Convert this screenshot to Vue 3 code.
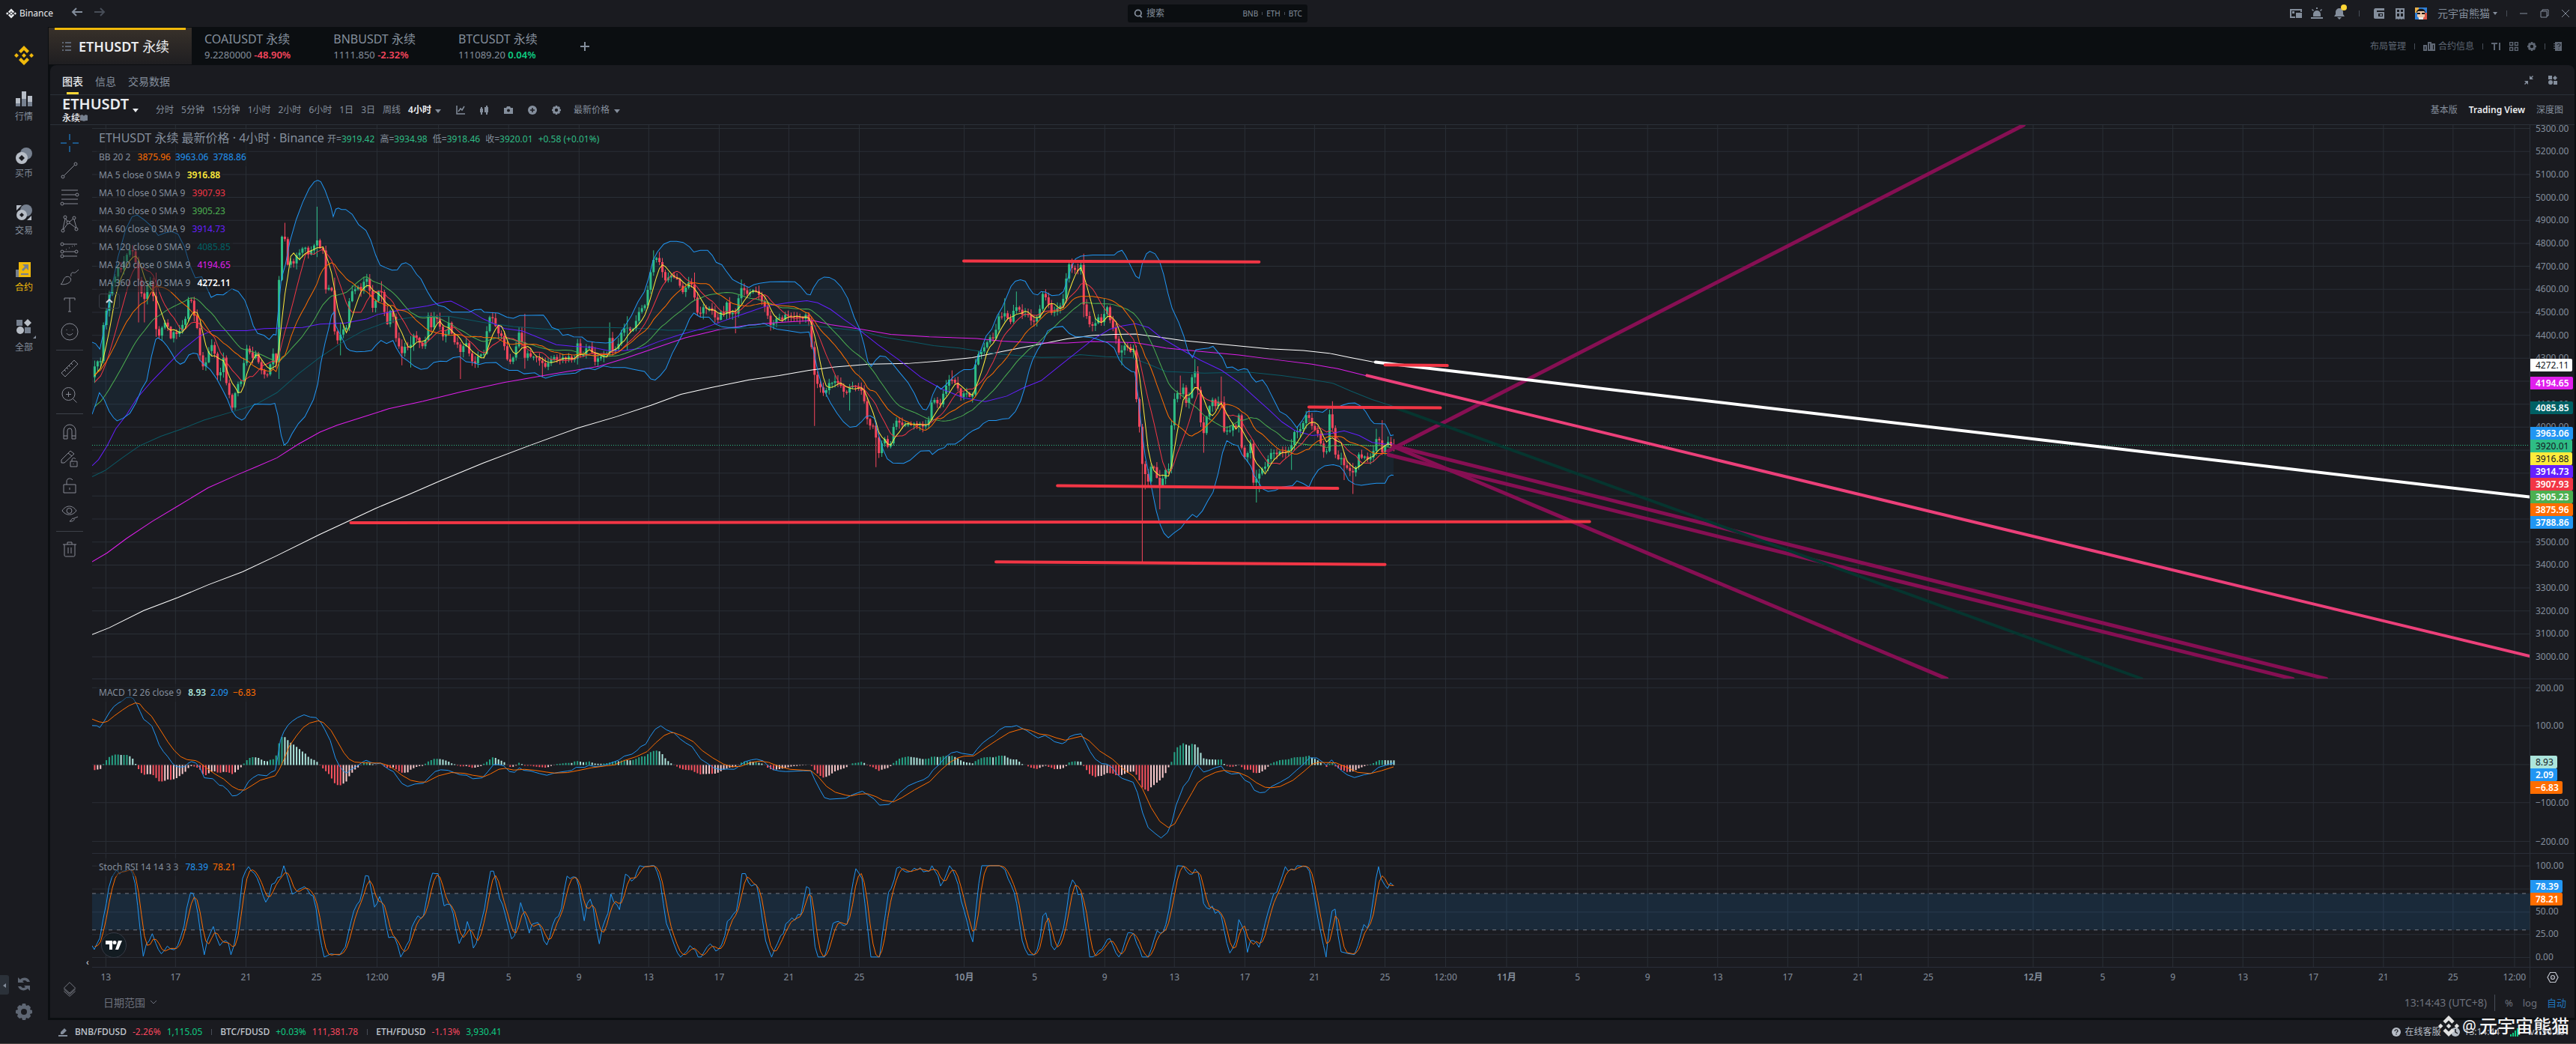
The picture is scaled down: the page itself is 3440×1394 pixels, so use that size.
<script setup>
import { ref } from 'vue'

// ---------- static content ----------
const marketTabs = [
  { symbol: 'COAIUSDT 永续', price: '9.2280000', change: '-48.90%', up: false },
  { symbol: 'BNBUSDT 永续', price: '1111.850', change: '-2.32%', up: false },
  { symbol: 'BTCUSDT 永续', price: '111089.20', change: '0.04%', up: true },
]
const panelTabs = ['图表', '信息', '交易数据']
const activePanel = ref('图表')
const intervals = ['分时', '5分钟', '15分钟', '1小时', '2小时', '6小时', '1日', '3日', '周线']
const views = ['基本版', 'Trading View', '深度图']
const activeView = ref('Trading View')

const legend = [
  { label: 'MA 5 close 0 SMA 9', value: '3916.88', color: '#ffeb3b', bold: true },
  { label: 'MA 10 close 0 SMA 9', value: '3907.93', color: '#f23645' },
  { label: 'MA 30 close 0 SMA 9', value: '3905.23', color: '#4caf50' },
  { label: 'MA 60 close 0 SMA 9', value: '3914.73', color: '#651fff' },
  { label: 'MA 120 close 0 SMA 9', value: '4085.85', color: '#006064' },
  { label: 'MA 240 close 0 SMA 9', value: '4194.65', color: '#e01fed' },
  { label: 'MA 360 close 0 SMA 9', value: '4272.11', color: '#ffffff', bold: true },
]

const tools = [
  [
    { name: '十字线', d: 'M12 0v8M12 16v8M0 12h8M16 12h8', active: true },
    { name: '趋势线', d: 'M4.5 19.5 18.5 5.5M5 21a2 2 0 1 1-4 0a2 2 0 1 1 4 0M22 4a2 2 0 1 1-4 0a2 2 0 1 1 4 0' },
    { name: '斐波那契', d: 'M1 3h22M1 9h19M1 15h22M4 21h19M24 9a2 2 0 1 1-4 0a2 2 0 1 1 4 0M4 21a2 2 0 1 1-4 0a2 2 0 1 1 4 0' },
    { name: '形态', d: 'M3 19 6 5M7 5l2 4M12 9l5-4M18 6l3 11M12 11l8 6M9 12 4 19M5 21a2 2 0 1 1-4 0a2 2 0 1 1 4 0M8 3a2 2 0 1 1-4 0a2 2 0 1 1 4 0M12 10a2 2 0 1 1-4 0a2 2 0 1 1 4 0M20 4a2 2 0 1 1-4 0a2 2 0 1 1 4 0M23 19a2 2 0 1 1-4 0a2 2 0 1 1 4 0' },
    { name: '预测', d: 'M4 3h18M4 13h15M4 19h18M7 10h1M11 8h1M15 6h1M18 5h1M4 3a2 2 0 1 1-4 0a2 2 0 1 1 4 0M4 13a2 2 0 1 1-4 0a2 2 0 1 1 4 0M23 13a2 2 0 1 1-4 0a2 2 0 1 1 4 0M4 19a2 2 0 1 1-4 0a2 2 0 1 1 4 0' },
    { name: '画笔', d: 'M0 20.5c4-2 3-9 8-10 4-1 7 3 5 6s-7 5-13 4zM14 10c-1-3 1-6 3-5 2 1 4-1 7-4' },
    { name: '文本', d: 'M5 6V3h14v3M12 3v18M10 21h4' },
    { name: '表情', d: 'M23 12a11 11 0 1 1-22 0a11 11 0 1 1 22 0M8 9v1M16 9v1M8 14c2 3 6 3 8 0' },
  ],
  [
    { name: '测量', d: 'M1 18 18 1l5 5L6 23zM5 14l2 2M8 11l2 2M11 8l2 2M14 5l2 2' },
    { name: '放大', d: 'M19 10a8.5 8.5 0 1 1-17 0a8.5 8.5 0 1 1 17 0M16.5 16.5l5 5M10.5 7v7M7 10.5h7' },
  ],
  [
    { name: '磁铁', d: 'M4 21V10a8 8 0 0 1 16 0v11h-5V10a3 3 0 0 0-6 0v11zM4 17h5M15 17h5' },
    { name: '锁定绘图', d: 'M1 17V13L13 1l5 4L5 17zM10 4l5 4M13 15h9v7h-9zM15 15v-2c0-3 4-3 5-1M17 18v1' },
    { name: '锁定', d: 'M4 10h16v11H4zM8 10V6c0-5 6-5 8-2M12 14v3' },
    { name: '隐藏', d: 'M2 9C7 1 16 1 21 9 16 16 7 16 2 9M15 9a3.5 3.5 0 1 1-7 0a3.5 3.5 0 1 1 7 0M12 23c3-1 2-4 5-4 3 1 0 5-5 4M18 19l5-2' },
  ],
  [{ name: '删除', d: 'M3 5h18M9 5V2h6v3M5 5v14c0 2 1 2 2 2h10c1 0 2 0 2-2V5M10 9v8M14 9v8' }],
]

const tickers = [
  { pair: 'BNB/FDUSD', change: '-2.26%', changeUp: false, price: '1,115.05', priceUp: true },
  { pair: 'BTC/FDUSD', change: '+0.03%', changeUp: true, price: '111,381.78', priceUp: false },
  { pair: 'ETH/FDUSD', change: '-1.13%', changeUp: false, price: '3,930.41', priceUp: true },
]

// ---------- chart geometry ----------
// One bar every STEP units; the price pane starts at X0, the lower panes at X0 + SHIFT.
const X0 = 40
const SPAN = 5671
const STEP = 6.808
const BARS = 445
const HALF = 1568
const SHIFT = 174
const barX = i => 46 + i * STEP

// traces are recorded in two halves, as flat x,y lists
const trace = (left, right) => {
  const points = []
  for (let i = 0; i < left.length; i += 2) points.push([left[i], left[i + 1]])
  for (let i = 0; i < right.length; i += 2) points.push([right[i] + HALF, right[i + 1]])
  return points
}
const line = points => 'M' + points.map(p => p[0].toFixed(1) + ' ' + p[1].toFixed(1)).join('L')
const sample = (points, x) => {
  const k = points.findIndex(p => p[0] >= x)
  if (k === -1) return points[points.length - 1][1]
  if (k === 0) return points[0][1]
  const [ax, ay] = points[k - 1]
  const [bx, by] = points[k]
  return bx === ax ? by : ay + (by - ay) * (x - ax) / (bx - ax)
}
const bars = Array.from({ length: BARS }, (_, i) => i)

const closes = trace(
  [44,725,50,705,58,702,63,706,67,580,75,550,84,478,92,465,99,430,106,440,113,415,120,395,127,380,133,377,140,405,147,460,154,500,160,535,166,490,173,470,180,475,187,600,194,635,201,610,208,590,215,595,222,640,229,618,236,625,243,617,250,598,257,580,263,525,270,522,276,565,283,590,290,680,297,720,304,710,311,675,318,655,325,680,332,745,339,735,346,690,352,765,359,800,365,845,372,800,379,770,386,765,393,710,399,665,406,675,413,695,420,680,427,705,434,730,441,742,447,745,454,715,461,680,468,710,474,485,481,340,488,340,494,425,501,410,508,422,515,395,522,388,529,375,536,372,543,392,550,380,557,365,563,350,570,372,577,380,583,495,590,490,597,488,603,610,610,645,617,628,624,610,631,612,637,535,644,500,651,495,658,485,665,500,671,475,678,458,685,490,692,550,699,530,706,500,713,500,720,560,726,600,733,555,740,570,747,635,754,660,761,680,768,660,775,662,782,655,788,628,795,635,802,650,809,660,815,645,822,570,829,605,836,575,843,580,850,605,857,635,863,625,870,590,877,625,884,650,891,655,898,680,905,655,912,650,919,690,926,708,933,710,940,680,947,685,954,680,961,575,968,575,975,580,982,620,989,625,996,635,1003,690,1010,708,1017,700,1024,680,1031,620,1038,620,1044,705,1051,675,1058,690,1072,690,1079,700,1086,705,1093,722,1100,710,1107,700,1114,690,1121,698,1128,700,1135,692,1142,698,1149,690,1156,700,1163,695,1169,650,1176,685,1183,685,1190,665,1197,660,1204,680,1210,705,1217,695,1224,690,1231,685,1238,680,1245,630,1252,680,1259,665,1266,650,1273,612,1280,605,1287,605,1294,618,1301,605,1308,575,1315,550,1322,548,1329,535,1336,460,1343,428,1349,392,1356,410,1363,418,1370,465,1377,470,1384,448,1391,458,1398,460,1405,470,1412,505,1419,495,1426,475,1433,470,1440,505,1447,560,1454,568,1461,545,1468,550,1475,548,1482,555,1489,575,1496,583,1503,560,1510,565,1517,530,1524,570,1531,560,1538,565,1545,510,1552,485,1559,500,1566,510],
  [0,510,6,495,13,497,20,500,27,520,34,540,41,550,48,600,55,598,62,580,70,575,78,582,86,565,94,572,118,575,126,580,134,565,141,595,148,690,155,768,162,770,169,785,177,805,184,765,191,770,198,760,206,765,214,775,220,792,228,795,236,775,244,775,251,780,258,785,266,795,272,855,279,890,286,892,293,890,298,955,305,980,312,920,318,935,325,960,332,935,338,882,345,875,352,885,360,892,368,885,376,890,384,885,392,890,400,885,408,900,415,880,421,870,427,802,434,822,441,828,447,830,454,788,461,770,468,752,475,760,482,770,489,790,495,815,502,790,509,800,516,810,522,797,528,700,535,680,542,675,549,660,556,645,563,630,570,640,576,605,583,565,590,575,597,560,604,585,611,590,618,540,624,548,631,555,638,572,645,562,652,572,659,592,666,585,673,572,679,540,686,492,693,530,699,540,706,570,713,555,720,545,727,540,733,515,740,445,747,412,754,440,761,435,767,442,773,420,780,555,787,575,794,600,801,600,808,590,815,570,822,598,829,550,835,545,842,595,849,610,856,650,862,685,869,668,876,655,883,665,890,680,897,668,902,825,909,900,916,1015,923,1035,930,1058,937,1000,944,1015,951,1052,958,1070,964,1040,971,1015,978,1018,984,875,991,805,998,795,1005,800,1012,775,1019,840,1026,800,1033,730,1039,735,1046,800,1053,905,1060,915,1066,855,1073,830,1080,812,1087,840,1094,815,1100,825,1106,910,1113,905,1120,905,1127,890,1134,895,1141,855,1147,960,1154,985,1161,970,1168,940,1174,1058,1181,1045,1188,1030,1195,1015,1202,1010,1209,985,1215,970,1222,970,1229,975,1236,965,1243,968,1250,970,1257,960,1264,945,1270,905,1277,908,1284,900,1291,880,1298,855,1304,870,1311,895,1318,905,1324,915,1331,945,1338,970,1345,965,1352,840,1358,900,1365,980,1372,990,1379,985,1386,1010,1393,1015,1400,1025,1407,1028,1413,1010,1419,975,1426,985,1432,980,1439,990,1446,985,1453,965,1459,930,1466,930,1473,970,1480,950,1487,938,1494,948,1500,948],
)
const bandUpper = trace(
  [40,648,48,652,58,668,70,600,84,500,100,400,118,320,133,282,145,277,160,290,178,310,194,337,208,330,225,325,240,333,255,370,268,425,280,460,295,457,305,485,317,517,330,509,345,510,365,492,380,500,395,525,404,555,415,600,425,622,440,628,452,640,462,625,468,627,475,530,480,465,490,420,500,355,515,290,530,240,545,200,557,180,565,176,572,180,582,205,595,250,601,282,607,260,613,257,620,261,630,261,645,275,660,305,677,322,688,350,700,395,710,423,722,430,738,438,750,437,760,420,770,416,782,425,795,450,805,463,820,500,832,525,845,540,860,545,877,560,918,560,930,553,945,552,952,560,985,563,1005,575,1020,578,1035,570,1090,569,1097,580,1110,605,1125,612,1135,628,1147,625,1160,632,1180,633,1192,645,1210,648,1235,650,1250,648,1265,630,1280,600,1295,570,1310,530,1325,500,1335,460,1345,410,1355,385,1370,362,1385,354,1400,354,1415,357,1430,370,1440,385,1455,380,1472,380,1483,395,1492,415,1505,422,1515,440,1530,465,1545,475,1562,485],
  [0,488,12,480,25,476,50,472,80,471,107,472,120,485,135,508,143,510,150,490,162,467,175,458,187,459,200,467,215,487,230,520,245,575,258,610,268,655,277,705,285,718,295,700,305,688,318,690,332,707,350,735,370,765,385,797,395,825,405,843,413,845,420,830,428,800,438,775,447,785,460,770,475,750,490,735,500,728,515,728,523,725,530,700,540,670,552,630,565,610,578,570,590,545,600,515,610,485,620,470,632,466,643,470,652,490,662,507,672,510,680,500,690,502,705,512,722,510,732,500,740,470,750,430,760,405,772,397,800,394,850,394,858,385,868,380,876,395,890,430,900,455,908,462,915,420,925,390,933,383,945,390,955,410,965,450,975,505,985,550,1000,590,1012,630,1022,675,1032,693,1040,670,1055,667,1070,665,1080,660,1090,675,1102,693,1112,722,1125,720,1138,730,1152,725,1160,727,1170,750,1180,764,1195,758,1205,775,1215,800,1225,825,1235,850,1250,860,1262,875,1275,897,1288,875,1300,850,1320,849,1335,852,1350,838,1365,840,1380,832,1395,826,1410,825,1425,835,1435,850,1447,875,1455,885,1480,886,1488,905,1493,920,1500,918],
)
const bandLower = trace(
  [40,858,48,830,57,795,68,815,80,850,90,868,98,877,112,870,128,855,142,825,155,785,167,760,178,690,188,640,193,635,205,645,215,660,225,680,235,702,245,712,255,706,265,685,275,680,285,682,290,700,300,712,315,728,330,755,345,790,355,815,365,848,375,865,388,875,395,870,405,850,418,828,455,829,465,826,472,860,480,920,487,948,495,940,505,915,520,885,535,865,545,840,555,815,565,770,572,710,582,650,590,610,597,570,603,560,607,600,615,620,625,645,632,665,640,672,655,676,675,675,690,672,700,657,712,643,725,652,740,643,748,665,760,690,775,703,790,718,805,727,820,724,835,707,850,703,865,704,880,693,895,690,910,705,925,707,940,713,955,708,980,707,995,722,1010,730,1030,730,1045,740,1070,737,1080,745,1095,753,1110,747,1130,742,1165,738,1180,727,1195,724,1210,728,1230,717,1250,722,1280,722,1300,727,1325,733,1340,755,1350,758,1362,745,1375,725,1390,680,1405,645,1420,610,1430,580,1440,563,1455,575,1475,575,1490,595,1505,603,1520,605,1545,605],
  [0,598,15,598,35,593,50,602,65,610,90,614,120,620,140,618,150,670,160,730,170,775,180,800,190,825,205,855,220,880,235,896,250,893,262,880,272,865,282,862,292,870,300,910,312,960,322,988,335,1000,360,1001,375,992,390,975,400,965,420,964,427,975,440,962,455,955,462,945,480,945,495,932,510,915,522,905,535,898,545,885,558,876,575,876,590,872,605,870,620,850,632,820,642,780,652,730,660,700,672,670,685,645,695,615,710,605,730,602,745,622,760,632,780,632,800,635,820,643,835,650,850,665,862,700,875,720,890,733,898,735,905,800,912,880,922,980,935,1060,948,1140,957,1180,966,1205,976,1218,988,1205,1005,1190,1020,1165,1032,1150,1042,1158,1055,1140,1068,1110,1080,1085,1092,1030,1102,970,1112,935,1125,945,1138,950,1147,975,1157,990,1168,1010,1175,1035,1185,1055,1195,1075,1208,1083,1225,1080,1240,1070,1265,1066,1275,1052,1290,1060,1303,1070,1312,1045,1325,1020,1340,1008,1360,1005,1375,1010,1385,1025,1395,1050,1410,1062,1425,1065,1445,1061,1460,1059,1480,1059,1488,1040,1495,1035,1500,1036],
)
const ma60 = trace(
  [40,1008,55,990,75,950,95,900,120,860,145,810,180,760,215,715,250,670,290,630,320,614,400,614,440,608,530,605,570,595,630,592,680,580,705,567,740,558,780,550,820,542,860,530,875,528,910,550,950,580,1000,608,1040,615,1080,635,1120,655,1160,660,1200,662,1240,672,1280,672,1320,665,1360,645,1410,625,1460,608,1500,590,1540,572],
  [0,560,40,543,90,533,135,527,160,533,190,552,220,580,260,615,300,655,350,700,400,750,450,785,500,810,550,821,600,805,640,780,680,760,720,720,760,680,800,640,840,610,870,600,900,594,930,605,960,635,1000,665,1050,700,1100,730,1140,765,1170,800,1210,845,1240,880,1270,905,1310,920,1350,915,1385,906,1420,920,1450,940,1480,945,1500,945],
)
const ma120 = trace(
  [40,1040,70,1022,110,985,150,950,200,922,250,900,300,875,360,853,420,830,470,795,520,740,570,692,620,650,670,615,720,592,760,580,800,573,870,572,950,590,1020,602,1110,611,1180,605,1240,605,1330,608,1380,613,1450,612],
  [0,606,50,600,140,598,200,607,260,615,310,632,370,645,430,658,490,665,540,675,590,683,680,692,740,691,770,684,830,690,890,693,930,712,970,733,1060,738,1160,735,1240,745,1310,757,1360,768,1400,790,1450,815,1500,835],
)
const ma240 = trace(
  [40,1288,75,1262,120,1220,180,1170,240,1125,310,1072,380,1033,420,1012,470,985,520,945,570,910,610,890,680,862,730,842,810,820,900,792,1000,765,1100,743,1220,718,1280,695,1350,665,1420,635,1500,611],
  [0,598,70,590,150,585,190,597,260,610,330,625,420,632,530,637,590,645,680,650,740,650,800,646,900,649,970,665,1060,676,1140,685,1220,698,1310,712,1370,725,1440,747],
)
const ma360 = trace(
  [40,1500,80,1480,160,1430,240,1392,310,1355,390,1317,470,1270,570,1208,630,1173,700,1132,780,1090,850,1052,950,1000,1060,948,1170,898,1260,865,1340,832,1410,800,1480,780],
  [0,758,70,745,140,730,200,720,280,712,370,710,440,703,520,693,590,675,680,653,740,638,800,628,850,625,900,624,950,632,1010,643,1110,655,1210,667,1290,672,1350,680,1400,693,1450,705,1500,713],
)
const macd = trace(
  [214,270,225,271,232,278,243,250,255,215,265,193,275,180,285,170,293,158,303,156,310,162,318,185,326,215,334,245,342,255,353,272,362,310,370,348,380,375,390,395,400,420,408,433,418,437,430,435,437,422,445,415,455,420,465,440,475,480,495,484,510,510,518,512,530,530,540,553,550,551,560,540,568,525,578,495,588,480,600,468,620,472,630,458,640,450,646,395,652,330,660,295,670,268,680,252,692,238,707,227,722,236,735,238,745,255,755,285,768,330,780,400,790,435,800,455,807,461,815,448,830,433,845,415,852,410,862,418,875,424,885,421,895,435,905,447,915,455,925,480,935,503,948,515,965,505,985,502,1000,475,1012,455,1025,448,1042,450,1058,460,1070,468,1085,470,1100,484,1122,480,1135,455,1148,427,1160,427,1172,432,1185,455,1197,458,1208,440,1218,450,1235,453,1255,463,1272,470,1285,463,1300,458,1320,453,1330,450,1340,438,1360,438,1370,430,1385,435,1400,432,1415,425,1430,415,1440,408,1452,393,1470,385,1482,370,1490,355,1502,345,1512,315,1524,285,1537,271,1550,287],
  [0,300,15,325,27,340,42,355,50,375,62,405,80,425,92,440,105,446,125,445,140,446,150,435,165,415,180,408,192,405,207,412,218,430,230,447,245,453,260,455,300,452,318,452,328,490,340,530,350,560,362,566,400,562,415,548,428,540,438,534,450,548,465,565,478,590,500,587,510,572,525,540,545,512,565,497,580,488,592,475,602,450,615,430,630,400,645,380,658,375,670,382,695,388,705,365,718,340,735,318,745,308,757,287,770,275,785,275,797,270,808,280,820,290,835,308,847,320,863,310,875,322,885,335,903,343,912,335,920,315,932,307,947,303,955,330,968,375,980,405,995,423,1007,425,1020,440,1030,465,1042,482,1068,498,1078,540,1090,620,1103,680,1120,705,1133,722,1148,700,1158,660,1168,590,1185,515,1197,490,1207,450,1217,427,1232,457,1245,450,1258,440,1273,433,1283,455,1297,465,1315,462,1328,490,1340,500,1350,530,1363,540,1375,538,1390,515,1410,498,1430,478,1448,450,1465,425,1478,400,1495,400,1510,418,1517,430,1530,408,1540,430,1552,450,1566,468,1583,479,1605,468,1622,462,1639,438,1655,430,1674,420],
)
const macdSignal = trace(
  [214,244,230,255,240,258,250,253,265,232,285,207,300,190,315,179,325,183,335,205,352,232,370,280,390,335,405,370,420,395,435,407,455,411,465,420,480,440,500,465,520,485,540,515,555,528,568,530,585,512,605,490,625,480,640,472,650,445,662,400,672,355,690,310,705,278,720,260,740,251,752,258,770,290,785,335,800,380,812,405,825,417,850,420,885,421,905,432,920,450,935,470,955,490,975,497,992,497,1005,485,1020,472,1050,459,1080,462,1100,470,1125,476,1140,465,1160,446,1175,442,1195,449,1220,446,1245,450,1270,457,1290,461,1320,459,1350,449,1375,440,1410,432,1430,428,1450,412,1480,395,1505,375,1525,340,1545,310,1560,299],
  [0,299,20,312,45,335,65,370,90,400,115,425,135,436,155,434,180,418,200,413,220,418,245,435,270,446,318,451,335,475,355,515,375,538,400,550,412,553,430,546,450,544,470,556,485,570,510,577,530,560,560,528,595,495,620,450,640,420,660,400,675,393,697,392,720,365,750,330,780,298,810,283,830,290,850,304,870,308,890,320,910,329,930,320,948,313,965,330,990,372,1020,405,1045,445,1070,475,1090,525,1110,600,1130,655,1150,680,1165,665,1185,600,1205,540,1218,500,1235,478,1260,458,1280,450,1315,460,1335,475,1355,500,1375,518,1390,520,1410,515,1440,490,1465,455,1485,425,1500,418,1540,420,1568,440,1590,458,1620,463,1645,452,1674,436],
)
const stochK = trace(
  [214,1150,219,1166,226,1140,232,1120,240,1040,247,980,253,915,260,875,267,855,272,845,278,862,285,850,292,848,300,835,308,860,314,900,320,990,326,1090,333,1193,340,1145,347,1130,354,1102,362,1140,368,1165,375,1183,382,1170,389,1152,396,1163,405,1167,413,1150,421,1110,428,1070,434,1000,443,937,449,940,455,975,460,1020,468,1120,475,1187,482,1130,489,1100,496,1073,503,1115,511,1150,518,1135,525,1130,531,1140,537,1187,544,1150,550,1090,557,990,564,880,571,850,578,832,585,850,592,860,598,878,605,910,612,950,618,975,625,955,632,903,639,898,646,875,653,873,660,828,667,865,673,900,680,943,688,935,695,923,702,918,708,912,715,925,722,945,728,950,735,1000,741,1080,748,1150,754,1196,762,1190,769,1183,776,1185,790,1188,797,1170,803,1155,810,1100,817,1050,823,1010,830,985,837,970,844,920,850,868,857,870,864,930,871,995,877,980,883,952,890,985,897,1060,904,1118,911,1115,918,1118,925,1150,932,1196,939,1175,945,1150,952,1130,958,1075,965,1050,972,1030,979,1040,985,1030,992,965,999,900,1006,858,1012,860,1019,860,1026,930,1033,990,1040,983,1047,985,1054,1020,1061,1090,1068,1142,1074,1118,1081,1100,1087,1053,1094,1090,1101,1160,1108,1140,1114,1090,1120,1050,1127,1000,1134,920,1141,850,1148,850,1155,900,1162,960,1169,985,1176,1030,1183,1080,1190,1123,1197,1110,1204,1040,1211,977,1217,1010,1224,1050,1231,1100,1237,1065,1244,1060,1251,1057,1258,1080,1265,1130,1272,1147,1278,1120,1285,1070,1292,1040,1299,1032,1306,1000,1312,930,1319,870,1326,880,1333,873,1340,875,1346,910,1353,990,1359,1050,1366,980,1373,963,1380,1000,1387,1080,1394,1143,1401,1080,1408,1045,1414,1020,1421,942,1428,975,1435,985,1441,1005,1448,930,1455,862,1462,870,1469,890,1476,880,1482,850,1488,828,1496,832,1505,832,1515,828,1522,828,1529,855,1536,895,1543,980,1550,1060,1557,1090,1563,1120],
  [0,1145,8,1180,15,1196,22,1185,29,1175,37,1150,44,1162,50,1170,56,1196,63,1196,70,1175,77,1155,84,1143,91,1155,97,1172,104,1165,111,1145,118,1110,124,1052,131,1042,137,1025,145,1010,152,940,158,860,166,860,173,895,180,910,187,904,192,906,199,965,206,1050,213,1130,220,1165,227,1196,234,1165,241,1140,248,1110,254,1102,260,1062,267,1052,274,1038,281,1048,288,1025,295,1025,302,965,308,912,315,920,321,1030,328,1155,335,1196,350,1196,356,1160,363,1110,370,1060,376,1055,383,1052,390,1065,396,1070,403,1062,410,960,417,890,423,840,430,858,437,880,444,980,451,1090,458,1196,478,1196,485,1100,492,1020,499,935,505,920,512,885,518,838,525,833,532,845,539,853,545,853,552,850,559,838,566,845,573,836,580,853,587,850,594,850,600,828,607,850,614,870,620,910,627,890,634,860,641,828,648,845,654,870,661,905,668,970,675,1010,682,1055,688,1100,695,1135,702,1010,709,900,716,828,757,828,764,836,770,845,777,880,784,905,791,935,797,980,803,1050,810,1130,817,1165,824,1187,838,1187,845,1165,852,1115,858,1030,865,1018,871,1060,878,1150,885,1167,892,1150,899,1120,906,1080,913,1010,920,920,927,885,934,903,940,945,947,942,954,1030,961,1110,967,1196,975,1195,982,1185,988,1170,995,1165,1002,1145,1008,1125,1014,1122,1021,1150,1028,1180,1035,1196,1042,1175,1049,1135,1056,1098,1062,1098,1069,1102,1076,1140,1083,1165,1089,1196,1103,1196,1110,1165,1117,1125,1124,1090,1131,1100,1138,1095,1144,1065,1151,1010,1158,935,1165,880,1171,828,1185,830,1192,850,1199,862,1206,862,1212,842,1219,855,1226,910,1232,980,1239,998,1246,1003,1252,990,1259,1020,1266,1012,1273,1030,1280,1090,1286,1140,1293,1180,1300,1160,1307,1130,1314,1045,1321,1070,1328,1100,1334,1177,1341,1130,1348,1130,1355,1140,1361,1157,1368,1115,1375,1060,1382,1015,1389,975,1395,942,1402,935,1408,905,1415,870,1422,832,1429,850,1435,842,1443,845,1450,828,1471,832,1478,850,1484,900,1491,970,1498,1040,1505,1100,1511,1150,1517,1196,1524,1080,1531,1010,1538,1003,1545,1110,1552,1175,1568,1182,1583,1186,1591,1150,1598,1105,1605,1065,1613,1080,1620,1040,1627,960,1633,880,1639,832,1645,880,1653,905,1660,920,1667,897,1673,908],
)

// ---------- candles ----------
const close = bars.map(i => sample(closes, barX(i)))
// long wicks: x, top, bottom
const longWicks = [
  [147, 440, 590], [160, 480, 590], [187, 445, 632], [474, 455, 755], [487, 300, 350], [562, 253, 400], [603, 460, 615], [617, 590, 686], [712, 470, 530],
  [759, 640, 715], [778, 630, 722], [895, 650, 755], [1044, 565, 725], [1091, 700, 750], [1247, 590, 685], [1288, 572, 670], [1349, 380, 430], [1440, 445, 520], [1539, 550, 622], [1553, 465, 515],
  [1722, 690, 892], [1804, 770, 847], [1865, 890, 1012], [2043, 730, 770], [2165, 520, 580], [2192, 500, 560], [2348, 390, 575], [2397, 520, 600], [2436, 660, 715],
  [2483, 900, 1292], [2491, 1000, 1077], [2525, 1020, 1135], [2571, 745, 810], [2605, 697, 745], [2627, 880, 970], [2668, 748, 830], [2748, 1020, 1115],
  [2755, 1020, 1085], [2830, 930, 1020], [2925, 820, 905], [2952, 980, 1050], [2973, 1000, 1090], [3026, 900, 960], [3041, 875, 975],
]
const noise = n => {
  const v = Math.sin(n * 12.9898) * 43758.5453
  return v - Math.floor(v)
}
const candles = { upBody: '', downBody: '', upWick: '', downWick: '' }
bars.forEach(i => {
  const x = barX(i).toFixed(1)
  const open = i ? close[i - 1] : 750
  const end = close[i]
  const side = end <= open ? 'up' : 'down'
  let top = Math.min(open, end)
  let bottom = Math.max(open, end)
  if (bottom - top < 3) bottom = top + 3
  candles[side + 'Body'] += `M${x} ${top.toFixed(1)}V${bottom.toFixed(1)}`
  top -= 2 + noise(i + 1) * 16
  bottom += 2 + noise(i + 700) * 16
  const long = longWicks.find(w => Math.abs(w[0] - barX(i)) < STEP / 2)
  if (long) {
    top = Math.min(top, long[1])
    bottom = Math.max(bottom, long[2])
  }
  candles[side + 'Wick'] += `M${x} ${top.toFixed(1)}V${bottom.toFixed(1)}`
})

// ---------- averages ----------
const average = length => line(bars.map(i => {
  let sum = 0
  for (let k = i - length + 1; k <= i; k++) sum += k < 0 ? 735 - k * 7 : close[k]
  return [barX(i), sum / length]
}))
const basis = line(bars.map(i => [barX(i), (sample(bandUpper, barX(i)) + sample(bandLower, barX(i))) / 2]))
const bandArea = line([...bandUpper, ...[...bandLower].reverse()]) + 'Z'
const curves = [
  { d: line(ma360), color: '#ffffff' },
  { d: line(ma240), color: '#e01fed' },
  { d: line(ma120), color: '#0b5a66' },
  { d: line(ma60), color: '#651fff' },
  { d: average(30), color: '#4caf50' },
  { d: average(10), color: '#f23645' },
  { d: average(5), color: '#ffeb3b' },
  { d: line(bandUpper), color: '#2196f3' },
  { d: line(bandLower), color: '#2196f3' },
  { d: basis, color: '#ff6d00' },
]
const drawings = [
  { d: 'M3055 965 4534 15', color: '#860f53', width: 5 },
  { d: 'M3068 950 5238 1629', color: '#860f53', width: 5 },
  { d: 'M3056 976 5160 1629', color: '#860f53', width: 5 },
  { d: 'M3068 952 4355 1629', color: '#860f53', width: 5 },
  { d: 'M3068 837 4809 1629', color: '#06352f', width: 4 },
  { d: 'M3006 745 5711 1563', color: '#ec407a', width: 4 },
  { d: 'M3026 706 5711 1099', color: '#ffffff', width: 4 },
  { d: 'M2068 411 2755 414', color: '#f23645', width: 4 },
  { d: 'M2286 1066 2938 1074', color: '#f23645', width: 4 },
  { d: 'M2143 1288 3048 1296', color: '#f23645', width: 4 },
  { d: 'M642 1174 3524 1171', color: '#f23645', width: 4 },
  { d: 'M2871 837 3177 839', color: '#f23645', width: 4 },
  { d: 'M3048 714 3193 716', color: '#f23645', width: 4 },
]

// ---------- lower panes ----------
const histogram = { rise: '', fade: '', drop: '', ease: '' }
let previous = 0
bars.forEach(i => {
  const x = barX(i) + SHIFT
  const value = sample(macdSignal, x) - sample(macd, x)
  const kind = value >= 0 ? (value >= previous ? 'rise' : 'fade') : (value < previous ? 'drop' : 'ease')
  histogram[kind] += `M${x.toFixed(1)} 429V${(427 - value + (value < 0 ? 0 : -1)).toFixed(1)}`
  previous = value
})
const stochD = line(bars.map(i => {
  const x = barX(i) + SHIFT
  return [x, (sample(stochK, x) + sample(stochK, x - STEP) + sample(stochK, x - 2 * STEP)) / 3]
}))

// ---------- axes ----------
const timeTicks = [
  [72, '13'], [234, '17'], [398, '21'], [562, '25'], [703, '12:00'], [846, '9月', true], [1009, '5'], [1173, '9'], [1335, '13'], [1499, '17'],
  [1661, '21'], [1825, '25'], [2069, '10月', true], [2233, '5'], [2396, '9'], [2558, '13'], [2722, '17'], [2884, '21'], [3048, '25'], [3189, '12:00'],
  [3331, '11月', true], [3496, '5'], [3659, '9'], [3822, '13'], [3985, '17'], [4149, '21'], [4312, '25'], [4556, '12月', true], [4718, '5'], [4881, '9'],
  [5044, '13'], [5208, '17'], [5371, '21'], [5533, '25'], [5676, '12:00'],
].map(([x, text, month]) => ({ x, text, month, left: (x - X0) / SPAN * 100 + '%' }))

const PRICE = { top: 15, height: 1614 }
const MACD = { top: 84, height: 696 }
const STOCH = { top: 780, height: 457 }
const at = (pane, y) => (y - pane.top) / pane.height * 100 + '%'

const priceTicks = Array.from({ length: 24 }, (_, i) => ({ y: 25 + i * 66.96, text: (5300 - i * 100) + '.00' }))
const macdTicks = [[118, '200.00'], [271, '100.00'], [427, '0.00'], [580, '−100.00'], [736, '−200.00']].map(([y, text]) => ({ y, text }))
const stochTicks = [[829, '100.00'], [922, '75.00'], [1015, '50.00'], [1105, '25.00'], [1198, '0.00']].map(([y, text]) => ({ y, text }))
const priceTags = [
  { y: 713, tags: [{ text: '4272.11', color: '#ffffff', dark: true }] },
  { y: 766, tags: [{ text: '4194.65', color: '#e01fed' }] },
  { y: 838, tags: [{ text: '4085.85', color: '#006064' }] },
  { y: 912, tags: [
    { text: '3963.06', color: '#2196f3' },
    { text: '3920.01', color: '#2ebd85', dark: true },
    { text: '3916.88', color: '#ffeb3b', dark: true },
    { text: '3914.73', color: '#651fff' },
    { text: '3907.93', color: '#f23645' },
    { text: '3905.23', color: '#4caf50' },
    { text: '3875.96', color: '#ff6d00' },
    { text: '3788.86', color: '#2196f3' },
  ] },
]
const macdTags = [{ y: 414, tags: [
  { text: '8.93', color: '#ace5dc', dark: true },
  { text: '2.09', color: '#2196f3' },
  { text: '−6.83', color: '#ff6d00' },
] }]
const stochTags = [{ y: 910, tags: [
  { text: '78.39', color: '#2196f3' },
  { text: '78.21', color: '#ff6d00' },
] }]
const panes = [
  { key: 'price', box: PRICE, ticks: priceTicks, groups: priceTags, x: X0 },
  { key: 'macd', box: MACD, ticks: macdTicks, groups: macdTags, x: X0 + SHIFT },
  { key: 'stoch', box: STOCH, ticks: stochTicks, groups: stochTags, x: X0 + SHIFT },
]
const grid = pane =>
  timeTicks.map(t => `M${t.x + pane.x - X0} ${pane.box.top}v${pane.box.height}`).join('') +
  pane.ticks.map(t => `M${pane.x} ${t.y}h${SPAN}`).join('')
</script>

<template>
  <div class="app">
    <header class="titlebar">
      <div class="title-left">
        <svg class="brand-icon" viewBox="0 0 24 24" fill="#eaecef">
          <path d="M12 1 5 8l3 3 4-4 4 4 3-3zM12 23l-7-7 3-3 4 4 4-4 3 3zM3 9l3 3-3 3-3-3zM21 9l3 3-3 3-3-3zM12 9l3 3-3 3-3-3z" />
        </svg>
        <span class="brand">Binance</span>
        <button class="nav-btn" aria-label="后退">
          <svg viewBox="0 0 16 16" width="16" height="16"><path d="M15 8H2M7 3 2 8l5 5" fill="none" stroke="#848e9c" stroke-width="2" /></svg>
        </button>
        <button class="nav-btn" aria-label="前进">
          <svg viewBox="0 0 16 16" width="16" height="16"><path d="M1 8h13M9 3l5 5-5 5" fill="none" stroke="#474d57" stroke-width="2" /></svg>
        </button>
      </div>
      <label class="search">
        <svg viewBox="0 0 12 12" width="12" height="12"><path d="M10 5.5a4.2 4.2 0 1 1-8.4 0a4.2 4.2 0 1 1 8.4 0M8 9l3 2" fill="none" stroke="#848e9c" stroke-width="1.8" /></svg>
        <input type="text" placeholder="搜索" aria-label="搜索">
        <a href="#">BNB</a><i></i><a href="#">ETH</a><i></i><a href="#">BTC</a>
      </label>
      <div class="title-right">
        <svg viewBox="0 0 16 16" width="16" height="16"><path d="M0 2h16v4h-2V4H2v8h5v2H0zM8 7h8v7H8zM3 5h3v3H3z" fill="#848e9c" /></svg>
        <svg class="gap-12" viewBox="0 0 16 16" width="16" height="16"><path d="M0 13h16v2H0zM3 12V9a5 5 0 0 1 10 0v3zM7 0h2v2H7zM2 2l2 2-1 1-2-2zM14 2l-2 2 1 1 2-2z" fill="#848e9c" /></svg>
        <span class="bell gap-14">
          <svg viewBox="0 0 16 16" width="16" height="16"><path d="M1 12 3 9V6a5 5 0 0 1 10 0v3l2 3zM5 13h6l-3 3z" fill="#848e9c" /></svg>
        </span>
        <i class="bar gap-18"></i>
        <svg class="gap-18" viewBox="0 0 16 16" width="16" height="16"><path d="M3 1h12v3H5v2h10v9H3c-2 0-2-1-2-3V4c0-2 1-3 2-3zM7 8v4h6V8zM9 9h3v2H9z" fill="#848e9c" fill-rule="evenodd" /></svg>
        <svg class="gap-12" viewBox="0 0 16 16" width="16" height="16"><path d="M2 1h12v15l-2-1-2 1-2-1-2 1-2-1-2 1zM4 3v3h3V3zM9 3v3h3V3zM4 8v4h3V8zM9 8v4h3V8z" fill="#848e9c" fill-rule="evenodd" /></svg>
        <svg class="gap-12" viewBox="0 0 16 16" width="16" height="16">
          <path d="M0 0h16v16H0z" fill="#2f7fd6" /><path d="M0 0h5v7H0z" fill="#e8b04b" /><path d="M11 7h5v9h-5z" fill="#d9574a" />
          <path d="M3 4h10v8l-3 3H6l-3-3z" fill="#efc9a8" /><path d="M2 7c-1-6 12-8 12 0l-2-2H4z" fill="#16181c" /><path d="M3 7h4v2H3zM9 7h4v2H9z" fill="#111" /><path d="M5 13h6v3H5z" fill="#e9ecef" />
        </svg>
        <button class="user">元宇宙熊猫<i class="caret"></i></button>
        <i class="bar gap-12"></i>
        <button class="win" aria-label="最小化"><svg viewBox="0 0 12 12" width="12" height="12"><path d="M1 6h10" /></svg></button>
        <button class="win" aria-label="还原"><svg viewBox="0 0 12 12" width="12" height="12"><path d="M1 3h8v8H1zM3 3V1h8v8H9" /></svg></button>
        <button class="win" aria-label="关闭"><svg viewBox="0 0 12 12" width="12" height="12"><path d="M1 1l10 10M11 1 1 11" /></svg></button>
      </div>
    </header>

    <div class="body">
      <nav class="sidebar">
        <svg class="side-logo" viewBox="0 0 26 26" fill="#f0b90b">
          <path d="M13 0 6 7l3 3 4-4 4 4 3-3zM13 26l-7-7 3-3 4 4 4-4 3 3zM3 10l3 3-3 3-3-3zM23 10l3 3-3 3-3-3zM13 10l3 3-3 3-3-3z" />
        </svg>
        <a href="#" class="side-item">
          <svg viewBox="0 0 24 24"><path d="M1 11h6v11H1zM9 2h6v20H9zM17 8h6v14h-6z" fill="#b7bdc6" /><path d="M1 18h6v4H1zM9 12h6v10H9zM17 16h6v6h-6z" fill="#76808f" /></svg>
          行情
        </a>
        <a href="#" class="side-item">
          <svg viewBox="0 0 24 24"><circle cx="15" cy="9" r="8" fill="#76808f" /><circle cx="9" cy="15" r="8" fill="#b7bdc6" /><path d="m9 11 4 4-4 4-4-4z" fill="#1a1b20" /></svg>
          买币
        </a>
        <a href="#" class="side-item">
          <svg viewBox="0 0 24 24"><circle cx="15" cy="9" r="8" fill="#76808f" /><circle cx="9" cy="15" r="7" fill="#b7bdc6" /><path d="m9 12 3 3-3 3-3-3z" fill="#1a1b20" /><path d="M2 2h7L2 9zM22 22h-6l6-6z" fill="#b7bdc6" /></svg>
          交易
        </a>
        <a href="#" class="side-item active">
          <svg viewBox="0 0 24 24"><path d="M1 12h6v10H1z" fill="#76808f" /><path d="M5 2h16v20H5z" fill="#f0b90b" /><path d="M10 5h8v8l-3-3-4 4-2-2 4-4zM8 17h10v2H8z" fill="#76808f" /></svg>
          合约
        </a>
        <a href="#" class="side-item more">
          <svg viewBox="0 0 24 24"><path d="M2 3h8v8H2zM13 13h8v8h-8z" fill="#76808f" /><path d="m17 2 5 5-5 5-5-5z" fill="#b7bdc6" /><circle cx="7" cy="17" r="5" fill="#b7bdc6" /></svg>
          全部
        </a>
        <div class="side-bottom">
          <button aria-label="刷新"><svg viewBox="0 0 22 22"><path d="M3 8V2l3 3c4-4 11-3 13 3h-4c-1-2-4-3-6-1l2 2H3zM19 13v7l-3-3c-4 4-11 3-13-3h4c1 2 4 3 6 1l-2-2z" fill="#5e6673" /></svg></button>
          <button aria-label="设置"><svg viewBox="0 0 22 22"><path d="M9 0h4l1 3 3-1 3 3-1 3 3 1v4l-3 1 1 3-3 3-3-1-1 3H9l-1-3-3 1-3-3 1-3-3-1V9l3-1-1-3 3-3 3 1zM11 7a4 4 0 1 0 0 8a4 4 0 1 0 0-8" fill="#5e6673" fill-rule="evenodd" /></svg></button>
          <button class="side-collapse" aria-label="收起"><i></i></button>
        </div>
      </nav>

      <main class="main">
        <div class="market-tabs">
          <button class="market-tab current">
            <svg viewBox="0 0 12 12" width="12" height="12"><path d="M0 0h2v2H0zM4 0h8v2H4zM0 5h2v2H0zM4 5h8v2H4zM0 10h2v2H0zM4 10h8v2H4z" fill="#5e6673" /></svg>
            <strong>ETHUSDT</strong><span>永续</span>
          </button>
          <button v-for="tab in marketTabs" :key="tab.symbol" class="market-tab">
            <span class="tab-symbol">{{ tab.symbol }}</span>
            <span class="tab-price">{{ tab.price }} <b :class="tab.up ? 'up' : 'down'">{{ tab.change }}</b></span>
          </button>
          <button class="add-tab" aria-label="添加"><svg viewBox="0 0 12 12" width="12" height="12"><path d="M6 0v12M0 6h12" stroke="#848e9c" stroke-width="2" /></svg></button>
          <div class="layout-tools">
            <button>布局管理</button>
            <i class="bar"></i>
            <button>
              <svg viewBox="0 0 16 12" width="16" height="12"><path d="M1 5h3v6H1zM7 1h3v10H7zM12 3h3v8h-3z" fill="none" stroke="#5e6673" stroke-width="2" /></svg>
              合约信息
            </button>
            <i class="bar"></i>
            <svg viewBox="0 0 12 12" width="12" height="12"><path d="M0 2h8M4 2v9M11 1v10" stroke="#5e6673" stroke-width="2" /></svg>
            <svg viewBox="0 0 12 12" width="12" height="12"><path d="M.5.5h4v4h-4zM7.500.5h4v4h-4zM.5 7.500h4v4h-4zM7.500 7.500h4v4h-4z" fill="none" stroke="#5e6673" stroke-width="1.500" /></svg>
            <svg viewBox="0 0 22 22" width="12" height="12"><path d="M9 0h4l1 3 3-1 3 3-1 3 3 1v4l-3 1 1 3-3 3-3-1-1 3H9l-1-3-3 1-3-3 1-3-3-1V9l3-1-1-3 3-3 3 1zM11 7a4 4 0 1 0 0 8a4 4 0 1 0 0-8" fill="#5e6673" fill-rule="evenodd" /></svg>
            <i class="bar"></i>
            <svg viewBox="0 0 12 12" width="12" height="12"><path d="M2 0h9v12H2V9H0V8h2V6H0V5h2V3H0V2h2z" fill="#5e6673" /><path d="M5 4c0-2 4-2 4 0S7 5 7 7M7 9v1" fill="none" stroke="#0b0e11" stroke-width="1" /></svg>
          </div>
        </div>

        <section class="panel">
          <div class="panel-head">
            <div class="panel-tabs">
              <button v-for="tab in panelTabs" :key="tab" :class="{ on: tab === activePanel }" @click="activePanel = tab">{{ tab }}</button>
            </div>
            <div class="panel-icons">
              <svg viewBox="0 0 12 12" width="12" height="12"><path d="M7 5V0l2 2 2-2 1 1-2 2 2 2zM5 7v5l-2-2-2 2-1-1 2-2-2-2z" fill="#848e9c" /></svg>
              <svg viewBox="0 0 12 12" width="12" height="12"><path d="M0 0h5v5H0zM7 7h5v5H7zM9 0l3 3-3 3-3-3z" fill="#848e9c" /><circle cx="3" cy="9" r="3" fill="#848e9c" /></svg>
            </div>
          </div>

          <div class="toolbar">
            <button class="symbol">
              <span class="symbol-name">ETHUSDT<i class="caret"></i></span>
              <span class="symbol-type">永续<svg viewBox="0 0 10 10" width="10" height="10"><path d="M0 1c2-1 4-1 5 1 1-2 3-2 5-1v7c-2 0-4 0-5 1-1-1-3-1-5-1z" fill="#76808f" /></svg></span>
            </button>
            <div class="intervals">
              <button v-for="item in intervals" :key="item">{{ item }}</button>
              <button class="on">4小时<i class="caret"></i></button>
            </div>
            <div class="chart-actions">
              <svg viewBox="0 0 12 12"><path d="M1 0v11h11M3 8l3-4 2 2 3-5" fill="none" stroke="#848e9c" stroke-width="1.5" /></svg>
              <svg viewBox="0 0 12 12"><path d="M0 4h4v5H0zM1 2h2v10H1zM6 2h5v7H6zM8 0h2v12H8z" fill="#848e9c" /></svg>
              <svg viewBox="0 0 12 12"><path d="M0 3h3l1-2h4l1 2h3v8H0zM6 4.500a2 2 0 1 0 0 4a2 2 0 1 0 0-4" fill="#848e9c" fill-rule="evenodd" /></svg>
              <svg viewBox="0 0 12 12"><circle cx="6" cy="6" r="6" fill="#848e9c" /><path d="M6 3v6M3 6h6" stroke="#1a1b20" stroke-width="1.5" /></svg>
              <svg viewBox="0 0 22 22"><path d="M9 0h4l1 3 3-1 3 3-1 3 3 1v4l-3 1 1 3-3 3-3-1-1 3H9l-1-3-3 1-3-3 1-3-3-1V9l3-1-1-3 3-3 3 1zM11 7a4 4 0 1 0 0 8a4 4 0 1 0 0-8" fill="#848e9c" fill-rule="evenodd" /></svg>
            </div>
            <button class="price-kind">最新价格<i class="caret"></i></button>
            <div class="views">
              <button v-for="view in views" :key="view" :class="{ on: view === activeView }" @click="activeView = view">{{ view }}</button>
            </div>
          </div>

          <div class="workspace">
            <aside class="draw-tools">
              <div v-for="(group, g) in tools" :key="g" class="tool-group">
                <button v-for="tool in group" :key="tool.name" :class="{ active: tool.active }" :aria-label="tool.name">
                  <svg viewBox="-1 -1 26 26"><path :d="tool.d" /></svg>
                </button>
              </div>
              <button class="layers" aria-label="对象树">
                <svg viewBox="-1 -1 26 26"><path d="M12 1l9 9-9 8-9-8zM3 12l9 8 9-8M3 15l9 8 9-8" /></svg>
              </button>
            </aside>

            <div class="chart">
              <div v-for="pane in panes" :key="pane.key" class="pane" :class="pane.key">
                <div class="plot">
                  <svg :viewBox="`${pane.x} ${pane.box.top} ${SPAN} ${pane.box.height}`" preserveAspectRatio="none">
                    <path class="grid" :d="grid(pane)" />
                    <template v-if="pane.key === 'price'">
                      <path class="fill-band" :d="bandArea" />
                      <path class="last-price" d="M40 948H5711" />
                      <path :d="candles.upWick" stroke="#2ebd85" />
                      <path :d="candles.downWick" stroke="#f6465d" />
                      <path :d="candles.upBody" stroke="#2ebd85" stroke-width="3" />
                      <path :d="candles.downBody" stroke="#f6465d" stroke-width="3" />
                      <path v-for="(curve, i) in curves" :key="i" :d="curve.d" :stroke="curve.color" />
                      <path v-for="(item, i) in drawings" :key="'d' + i" class="drawing" :d="item.d" :stroke="item.color" :stroke-width="item.width" />
                    </template>
                    <template v-else-if="pane.key === 'macd'">
                      <path :d="histogram.rise" stroke="#26a184" stroke-width="2" />
                      <path :d="histogram.fade" stroke="#ace5dc" stroke-width="2" />
                      <path :d="histogram.drop" stroke="#f7525f" stroke-width="2" />
                      <path :d="histogram.ease" stroke="#fccbcd" stroke-width="2" />
                      <path :d="line(macd)" stroke="#2196f3" />
                      <path :d="line(macdSignal)" stroke="#ff6d00" />
                    </template>
                    <template v-else>
                      <path class="fill-range" d="M214 940H5885V1087H214z" />
                      <path class="limit" d="M214 940H5885M214 1087H5885" />
                      <path :d="line(stochK)" stroke="#2196f3" />
                      <path :d="stochD" stroke="#ff6d00" />
                    </template>
                  </svg>

                  <div v-if="pane.key === 'price'" class="legend">
                    <div class="legend-title">
                      ETHUSDT 永续 最新价格 · 4小时 · Binance
                      <span class="ohlc">开=<b>3919.42</b> 高=<b>3934.98</b> 低=<b>3918.46</b> 收=<b>3920.01</b> <b>+0.58 (+0.01%)</b></span>
                    </div>
                    <div class="legend-row">BB 20 2 <span class="orange">3875.96</span><span class="blue">3963.06</span><span class="blue">3788.86</span></div>
                    <div v-for="row in legend" :key="row.label" class="legend-row">
                      {{ row.label }} <span :class="{ bold: row.bold }" :style="{ color: row.color }">{{ row.value }}</span>
                    </div>
                    <button class="legend-toggle" aria-label="折叠"><svg viewBox="0 0 10 6" width="10" height="6"><path d="M1 5l4-4 4 4" fill="none" stroke="#d1d4dc" stroke-width="2" /></svg></button>
                  </div>
                  <div v-else-if="pane.key === 'macd'" class="legend small">
                    <div class="legend-row">MACD 12 26 close 9 <span class="mint bold">8.93</span><span class="blue">2.09</span><span class="orange">−6.83</span></div>
                  </div>
                  <div v-else class="legend small">
                    <div class="legend-row">Stoch RSI 14 14 3 3 <span class="blue">78.39</span><span class="orange">78.21</span></div>
                  </div>
                  <a v-if="pane.key === 'stoch'" class="tv-logo" href="#" aria-label="TradingView">
                    <svg viewBox="0 0 22 12" width="22" height="12" fill="#fff"><path d="M0 0h9v12H5V5H0zM17 0h5l-5 12h-4z" /><circle cx="12" cy="2.5" r="2.5" /></svg>
                  </a>
                  <span v-if="pane.key === 'stoch'" class="edge-mark">‹</span>
                </div>
                <div class="axis">
                  <span v-for="tick in pane.ticks" :key="tick.text" class="tick" :style="{ top: at(pane.box, tick.y) }">{{ tick.text }}</span>
                  <div v-for="group in pane.groups" :key="group.y" class="tags" :style="{ top: at(pane.box, group.y) }">
                    <span v-for="tag in group.tags" :key="tag.text" :class="{ dark: tag.dark }" :style="{ background: tag.color }">{{ tag.text }}</span>
                  </div>
                </div>
              </div>

              <div class="time-row">
                <div class="time-axis">
                  <span v-for="tick in timeTicks" :key="tick.x" :class="{ month: tick.month }" :style="{ left: tick.left }">{{ tick.text }}</span>
                </div>
                <button class="axis-settings" aria-label="坐标设置">
                  <svg viewBox="0 0 16 16" width="16" height="16"><path d="M4.5 1.5h7L15 8l-3.500 6.500h-7L1 8zM10.500 8a2.500 2.500 0 1 1-5 0a2.500 2.500 0 1 1 5 0M8 8v.5" fill="none" stroke="#c1c4cd" stroke-width="1.2" /></svg>
                </button>
              </div>

              <div class="range-row">
                <button class="range">日期范围<svg viewBox="0 0 8 5" width="8" height="5"><path d="M0 0l4 4 4-4" fill="none" stroke="#6d717c" /></svg></button>
                <span class="clock">13:14:43 (UTC+8)</span>
                <i class="bar tall"></i>
                <button>%</button>
                <button>log</button>
                <button class="auto">自动</button>
              </div>
            </div>
          </div>
        </section>
      </main>
    </div>

    <footer class="statusbar">
      <svg class="edit" viewBox="0 0 12 12" width="12" height="12"><path d="M8 1l3 3-5 5H3V6zM0 10h12v2H0z" fill="#848e9c" /></svg>
      <div v-for="item in tickers" :key="item.pair" class="ticker">
        <b>{{ item.pair }}</b>
        <span :class="item.changeUp ? 'up' : 'down'">{{ item.change }}</span>
        <span :class="item.priceUp ? 'up' : 'down'">{{ item.price }}</span>
      </div>
      <div class="status-right">
        <svg viewBox="0 0 12 12" width="12" height="12"><circle cx="6" cy="6" r="6" fill="#b7bdc6" /><path d="M4 5c0-3 4-3 4 0 0 1-2 1-2 2M6 8v1.5" fill="none" stroke="#1a1b20" stroke-width="1.2" /></svg>
        <a href="#" class="help">在线客服</a>
        <svg viewBox="0 0 12 12" width="12" height="12"><circle cx="6" cy="6" r="6" fill="#b7bdc6" /><path d="M6 2v4l3 2" fill="none" stroke="#1a1b20" stroke-width="1.5" /></svg>
        <span class="now">13:14:44</span>
        <svg viewBox="0 0 12 12" width="12" height="12"><path d="M0 9h2v3H0zM3 7h2v5H3zM6 4h2v8H6zM9 1h2v11H9z" fill="#0ecb81" /></svg>
        <span class="version">v1.54.10</span>
      </div>
      <div class="watermark">
        <svg viewBox="0 0 26 26" width="28" height="28" fill="#e2e2e2"><path d="M13 0 6 7l3 3 4-4 4 4 3-3zM13 26l-7-7 3-3 4 4 4-4 3 3zM3 10l3 3-3 3-3-3zM23 10l3 3-3 3-3-3zM13 10l3 3-3 3-3-3z" /></svg>
        @<span>元宇宙熊猫</span>
      </div>
    </footer>
  </div>
</template>

<style>
body {
  background: #0b0e11;
}
</style>

<style scoped>
.app {
  display: flex;
  flex-direction: column;
  box-sizing: border-box;
  height: 100vh;
  min-height: 900px;
  background: #0b0e11;
  color: #848e9c;
  font-family: "Noto Sans", "Noto Sans CJK SC", sans-serif;
  font-size: 12px;
  line-height: 16px;
  overflow: hidden;
}
button {
  margin: 0;
  border: 0;
  padding: 0;
  background: none;
  color: inherit;
  font: inherit;
  white-space: nowrap;
  cursor: pointer;
}
a {
  color: inherit;
  text-decoration: none;
}
svg {
  display: block;
  flex: none;
}
.up {
  color: #0ecb81;
}
.down {
  color: #f6465d;
}
.caret {
  display: inline-block;
  border: 4px solid transparent;
  border-top: 5px solid currentColor;
  border-bottom: 0;
}
.bar {
  width: 1px;
  height: 8px;
  background: #474d57;
}
.gap-12 {
  margin-left: 12px;
}
.gap-14 {
  margin-left: 14px;
}
.gap-18 {
  margin-left: 18px;
}

/* title bar */
.titlebar {
  display: grid;
  grid-template-columns: 8fr 240px 9fr;
  align-items: center;
  flex: none;
  height: 36px;
  background: #1a1b20;
}
.title-left {
  display: flex;
  align-items: center;
  padding-left: 8px;
}
.brand-icon {
  width: 14px;
  height: 14px;
}
.brand {
  margin: 0 24px 0 4px;
  color: #eaecef;
}
.nav-btn {
  margin-right: 14px;
  padding-bottom: 4px;
}
.search {
  display: flex;
  align-items: center;
  gap: 5px;
  height: 24px;
  padding: 0 7px 0 8px;
  border-radius: 3px;
  background: #0b0e11;
  font-size: 10px;
}
.search input {
  flex: 1;
  min-width: 0;
  border: 0;
  padding: 0;
  outline: 0;
  background: none;
  color: #eaecef;
  font: inherit;
  font-size: 12px;
}
.search input::placeholder {
  color: #848e9c;
}
.search i {
  width: 1px;
  height: 4px;
  background: #474d57;
}
.title-right {
  display: flex;
  align-items: center;
  justify-content: flex-end;
  padding-right: 8px;
}
.bell {
  position: relative;
}
.bell::after {
  content: "";
  position: absolute;
  top: -4px;
  right: -2px;
  width: 8px;
  height: 8px;
  border-radius: 4px;
  background: #fcd535;
}
.user {
  display: flex;
  align-items: center;
  gap: 4px;
  margin-left: 14px;
  font-size: 14px;
}
.user .caret {
  border-width: 4px 3px 0;
}
.win {
  margin-left: 16px;
}
.win svg {
  fill: none;
  stroke: #848e9c;
}

/* sidebar */
.body {
  display: flex;
  flex: 1;
  min-height: 0;
}
.sidebar {
  position: relative;
  display: flex;
  flex-direction: column;
  align-items: center;
  flex: none;
  width: 64px;
  background: #1a1b20;
}
.side-logo {
  width: 26px;
  height: 26px;
  margin: 25px 0 33px;
}
.side-item {
  display: flex;
  flex-direction: column;
  align-items: center;
  gap: 4px;
  height: 76px;
}
.side-item svg {
  width: 24px;
  height: 24px;
}
.side-item.active {
  color: #f0b90b;
}
.side-item.more {
  position: relative;
  gap: 8px;
}
.side-item.more::after {
  content: "";
  position: absolute;
  top: 24px;
  right: -4px;
  border: 2px solid #848e9c;
  border-top-color: transparent;
  border-left-color: transparent;
}
.side-bottom {
  display: flex;
  flex-direction: column;
  gap: 15px;
  margin-top: auto;
}
.side-bottom svg {
  width: 22px;
  height: 22px;
}
.side-collapse {
  position: absolute;
  left: 0;
  bottom: 34px;
  width: 12px;
  height: 26px;
  border-radius: 0 3px 3px 0;
  background: #2b3139;
}
.side-collapse i {
  display: inline-block;
  border: 3px solid transparent;
  border-right: 4px solid #848e9c;
  border-left: 0;
}

/* market tabs */
.main {
  display: flex;
  flex-direction: column;
  flex: 1;
  min-width: 0;
  padding: 0 0 3px 1px;
}
.market-tabs {
  display: flex;
  align-items: stretch;
  gap: 57px;
  flex: none;
  height: 51px;
}
.market-tab {
  display: flex;
  flex-direction: column;
  justify-content: center;
  text-align: left;
}
.market-tab.current {
  position: relative;
  flex-direction: row;
  align-items: center;
  justify-content: flex-start;
  gap: 5px;
  box-sizing: border-box;
  width: 191px;
  height: 49px;
  margin-top: 1px;
  margin-right: -40px;
  padding-left: 18px;
  background: linear-gradient(#38312a, #1f1e21);
  color: #eaecef;
  font-size: 18px;
}
.market-tab.current::before {
  content: "";
  position: absolute;
  top: 0;
  left: 8px;
  right: 8px;
  height: 3px;
  background: #f0b90b;
}
.market-tab.current svg {
  margin-right: 5px;
}
.market-tab.current strong {
  font-weight: 600;
}
.tab-symbol {
  font-size: 16px;
  line-height: 22px;
}
.tab-price {
  font-size: 13px;
  line-height: 20px;
}
.tab-price b {
  font-weight: 600;
}
.layout-tools {
  display: flex;
  align-items: center;
  gap: 12px;
  margin-left: auto;
  padding-right: 18px;
  color: #5e6673;
}
.layout-tools button {
  display: flex;
  align-items: center;
  gap: 4px;
}
.layout-tools .bar {
  margin: 0 -1px;
}

/* panel */
.panel {
  display: flex;
  flex-direction: column;
  flex: 1;
  min-height: 0;
  margin: 0 2px 0 2px;
  border-radius: 8px 8px 0 0;
  background: #1a1b20;
}
.panel-head {
  display: flex;
  justify-content: space-between;
  flex: none;
  height: 39px;
  padding: 0 23px 0 16px;
  border-bottom: 1px solid #2b3139;
}
.panel-tabs {
  display: flex;
  gap: 16px;
  font-size: 14px;
}
.panel-tabs button {
  position: relative;
  padding-top: 4px;
}
.panel-tabs .on {
  color: #eaecef;
  font-weight: 500;
}
.panel-tabs .on::after {
  content: "";
  position: absolute;
  bottom: 0;
  left: 6px;
  right: 6px;
  height: 3px;
  background: #fcd535;
}
.panel-icons {
  display: flex;
  align-items: center;
  gap: 20px;
}
.toolbar {
  display: flex;
  align-items: center;
  flex: none;
  height: 39px;
  padding: 0 15px 0 16px;
  border-bottom: 1px solid #2b3139;
}
.symbol {
  display: flex;
  flex-direction: column;
  width: 125px;
  color: #eaecef;
  text-align: left;
}
.symbol-name {
  display: flex;
  align-items: flex-end;
  font-size: 20px;
  font-weight: 600;
  line-height: 22px;
}
.symbol-name .caret {
  margin-left: 5px;
}
.symbol-type {
  display: flex;
  align-items: center;
  font-weight: 500;
}
.intervals {
  display: flex;
  gap: 10px;
}
.intervals .on,
.views .on {
  color: #eaecef;
  font-weight: 600;
}
.intervals .caret {
  margin-left: 5px;
  color: #848e9c;
}
.chart-actions {
  display: flex;
  gap: 20px;
  margin: 0 17px 0 20px;
}
.chart-actions svg {
  width: 12px;
  height: 12px;
}
.price-kind .caret {
  margin-left: 6px;
}
.views {
  display: flex;
  gap: 15px;
  margin-left: auto;
}

/* chart workspace */
.workspace {
  display: flex;
  flex: 1;
  min-height: 0;
}
.draw-tools {
  display: flex;
  flex-direction: column;
  align-items: center;
  flex: none;
  box-sizing: border-box;
  width: 56px;
  padding: 6px 4px 20px 0;
}
.tool-group + .tool-group {
  border-top: 1px solid #3d4149;
  margin-top: 6px;
  padding-top: 6px;
}
.draw-tools button {
  display: flex;
  align-items: center;
  justify-content: center;
  width: 36px;
  height: 36px;
}
.draw-tools svg {
  width: 26px;
  height: 26px;
  fill: none;
  stroke: #868993;
  stroke-width: 1;
}
.draw-tools .active svg {
  stroke: #2196f3;
}
.draw-tools .layers {
  margin-top: auto;
}
.draw-tools .layers svg {
  width: 22px;
  height: 22px;
}
.chart {
  display: flex;
  flex-direction: column;
  flex: 1;
  min-width: 0;
}
.pane {
  display: flex;
  box-sizing: border-box;
  min-height: 0;
  border-bottom: 1px solid #2a2e39;
}
.pane.price {
  flex: 742 0 0;
}
.pane.macd {
  flex: 232 0 0;
}
.pane.stoch {
  flex: 152 0 0;
}
.plot {
  position: relative;
  flex: 1;
  min-width: 0;
}
.plot > svg {
  position: absolute;
  inset: 0;
  width: 100%;
  height: 100%;
}
.plot > svg path {
  fill: none;
  vector-effect: non-scaling-stroke;
}
.plot > svg .fill-band {
  fill: rgba(33, 150, 243, 0.07);
}
.plot > svg .fill-range {
  fill: rgba(33, 150, 243, 0.13);
}
.plot > svg .grid {
  stroke: #2a2f36;
  shape-rendering: crispEdges;
}
.plot > svg .last-price {
  stroke: #2ebd85;
  stroke-dasharray: 1 2;
  shape-rendering: crispEdges;
}
.plot > svg .limit {
  stroke: #787b86;
  stroke-dasharray: 5 6;
  shape-rendering: crispEdges;
}
.plot > svg .drawing {
  stroke-linecap: round;
}
.axis {
  position: relative;
  flex: none;
  width: 59px;
  border-left: 1px solid #2b3139;
}
.tick {
  position: absolute;
  left: 7px;
  transform: translateY(-50%);
}
.tags {
  position: absolute;
  left: 0;
  display: flex;
  flex-direction: column;
  align-items: flex-start;
  margin-top: -8px;
}
.tags span {
  padding: 0 5px 0 7px;
  border-radius: 0 2px 2px 0;
  color: #fff;
  font-weight: 600;
  line-height: 17px;
}
.tags .dark {
  color: #131722;
  font-weight: 400;
}

/* legends */
.legend {
  position: relative;
  display: flex;
  flex-direction: column;
  align-items: flex-start;
  padding: 5px 0 0 6px;
}
.legend.small {
  padding-top: 6px;
}
.legend-title,
.legend-row {
  padding: 0 3px;
  background: rgba(26, 27, 32, 0.5);
  line-height: 24px;
  white-space: nowrap;
}
.legend-title {
  font-size: 16px;
}
.ohlc {
  font-size: 12px;
}
.ohlc b {
  margin-right: 4px;
  color: #2ebd85;
  font-weight: 400;
}
.legend-row span {
  margin-left: 6px;
}
.orange {
  color: #ff6d00;
}
.blue {
  color: #2196f3;
}
.mint {
  color: #ace5dc;
}
.bold {
  font-weight: 600;
}
.legend-toggle {
  display: flex;
  align-items: center;
  justify-content: center;
  box-sizing: border-box;
  width: 28px;
  height: 20px;
  margin: 2px 3px;
  border: 1px solid #3a3d46;
  border-radius: 3px;
}
.tv-logo {
  position: absolute;
  bottom: 12px;
  left: 12px;
  display: flex;
  align-items: center;
  justify-content: center;
  box-sizing: border-box;
  width: 34px;
  height: 34px;
  border: 1px solid #363a45;
  border-radius: 17px;
  background: #131c22;
}
.edge-mark {
  position: absolute;
  bottom: -2px;
  left: -8px;
  color: #d1d4dc;
}

/* time axis */
.time-row {
  display: flex;
  flex: none;
  height: 27px;
}
.time-axis {
  position: relative;
  flex: 1;
  overflow: hidden;
}
.time-axis span {
  position: absolute;
  top: 5px;
  transform: translateX(-50%);
}
.time-axis .month {
  font-weight: 600;
}
.axis-settings {
  display: flex;
  align-items: center;
  justify-content: center;
  width: 60px;
  border-left: 1px solid #2b3139;
}
.range-row {
  display: flex;
  align-items: center;
  flex: none;
  gap: 13px;
  height: 40px;
  padding: 0 11px 0 15px;
  color: #6d717c;
  font-size: 13px;
}
.range {
  display: flex;
  align-items: center;
  gap: 7px;
  margin-right: auto;
  font-size: 14px;
}
.range-row .clock {
  font-size: 14px;
  margin-right: -3px;
}
.tall {
  height: 22px;
}
.auto {
  color: #1f74bd;
}

/* status bar */
.statusbar {
  position: relative;
  display: flex;
  align-items: center;
  flex: none;
  box-sizing: border-box;
  height: 32px;
  padding-left: 78px;
  border-bottom: 1px solid #4b4644;
  background: #1a1b20;
}
.edit {
  margin-right: 10px;
}
.ticker {
  display: flex;
  align-items: center;
  gap: 8px;
}
.ticker b {
  color: #c3c8d0;
  font-weight: 500;
}
.ticker + .ticker::before {
  content: "";
  width: 1px;
  height: 8px;
  margin: 0 3px 0 12px;
  background: #474d57;
}
.status-right {
  display: flex;
  align-items: center;
  margin-left: auto;
  padding-right: 15px;
  color: #b7bdc6;
}
.help {
  margin: 0 13px 0 6px;
}
.now {
  margin: 0 14px 0 6px;
}
.version {
  margin-left: 14px;
}
.watermark {
  position: absolute;
  right: 9px;
  bottom: 7px;
  display: flex;
  align-items: center;
  gap: 4px;
  color: #f2f2f2;
  font-size: 21px;
  line-height: 32px;
}
.watermark span {
  font-size: 24px;
  font-weight: 500;
}
</style>
